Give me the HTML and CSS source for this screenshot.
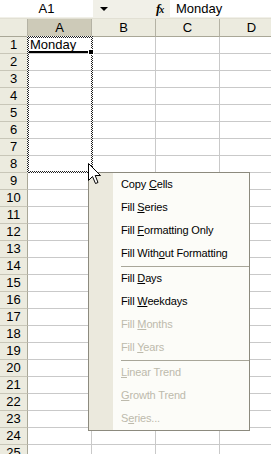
FILE: index.html
```html
<!DOCTYPE html>
<html>
<head>
<meta charset="utf-8">
<link rel="stylesheet" href="styles.css">
</head>
<body>
<div class="app">
  <div class="fbar">
    <div class="namebox">A1</div>
    <div class="drop"><span class="tri"></span></div>
    <div class="fx"><i>f</i><span class="x">x</span></div>
    <div class="formula">Monday</div>
  </div>
  <div class="sheet">
    <div class="hd corner"></div><div class="hd sel">A</div><div class="hd">B</div><div class="hd">C</div><div class="hd">D</div>
    <div class="rh">1</div><div class="c">Monday</div><div class="c"></div><div class="c"></div><div class="c"></div>
    <div class="rh">2</div><div class="c"></div><div class="c"></div><div class="c"></div><div class="c"></div>
    <div class="rh">3</div><div class="c"></div><div class="c"></div><div class="c"></div><div class="c"></div>
    <div class="rh">4</div><div class="c"></div><div class="c"></div><div class="c"></div><div class="c"></div>
    <div class="rh">5</div><div class="c"></div><div class="c"></div><div class="c"></div><div class="c"></div>
    <div class="rh">6</div><div class="c"></div><div class="c"></div><div class="c"></div><div class="c"></div>
    <div class="rh">7</div><div class="c"></div><div class="c"></div><div class="c"></div><div class="c"></div>
    <div class="rh">8</div><div class="c"></div><div class="c"></div><div class="c"></div><div class="c"></div>
    <div class="rh">9</div><div class="c"></div><div class="c"></div><div class="c"></div><div class="c"></div>
    <div class="rh">10</div><div class="c"></div><div class="c"></div><div class="c"></div><div class="c"></div>
    <div class="rh">11</div><div class="c"></div><div class="c"></div><div class="c"></div><div class="c"></div>
    <div class="rh">12</div><div class="c"></div><div class="c"></div><div class="c"></div><div class="c"></div>
    <div class="rh">13</div><div class="c"></div><div class="c"></div><div class="c"></div><div class="c"></div>
    <div class="rh">14</div><div class="c"></div><div class="c"></div><div class="c"></div><div class="c"></div>
    <div class="rh">15</div><div class="c"></div><div class="c"></div><div class="c"></div><div class="c"></div>
    <div class="rh">16</div><div class="c"></div><div class="c"></div><div class="c"></div><div class="c"></div>
    <div class="rh">17</div><div class="c"></div><div class="c"></div><div class="c"></div><div class="c"></div>
    <div class="rh">18</div><div class="c"></div><div class="c"></div><div class="c"></div><div class="c"></div>
    <div class="rh">19</div><div class="c"></div><div class="c"></div><div class="c"></div><div class="c"></div>
    <div class="rh">20</div><div class="c"></div><div class="c"></div><div class="c"></div><div class="c"></div>
    <div class="rh">21</div><div class="c"></div><div class="c"></div><div class="c"></div><div class="c"></div>
    <div class="rh">22</div><div class="c"></div><div class="c"></div><div class="c"></div><div class="c"></div>
    <div class="rh">23</div><div class="c"></div><div class="c"></div><div class="c"></div><div class="c"></div>
    <div class="rh">24</div><div class="c"></div><div class="c"></div><div class="c"></div><div class="c"></div>
    <div class="rh">25</div><div class="c"></div><div class="c"></div><div class="c"></div><div class="c"></div>
  </div>

  <div class="marquee">
    <span class="m-top"></span><span class="m-bottom"></span><span class="m-left"></span><span class="m-right"></span>
  </div>
  <div class="active-line"></div>
  <div class="handle"></div>

  <div class="menu">
    <div class="item">Copy <u>C</u>ells</div>
    <div class="item">Fill <u>S</u>eries</div>
    <div class="item">Fill <u>F</u>ormatting Only</div>
    <div class="item">Fill With<u>o</u>ut Formatting</div>
    <div class="sep"></div>
    <div class="item">Fill <u>D</u>ays</div>
    <div class="item">Fill <u>W</u>eekdays</div>
    <div class="item dis">Fill <u>M</u>onths</div>
    <div class="item dis">Fill <u>Y</u>ears</div>
    <div class="sep"></div>
    <div class="item dis"><u>L</u>inear Trend</div>
    <div class="item dis"><u>G</u>rowth Trend</div>
    <div class="item dis">S<u>e</u>ries...</div>
  </div>

  <svg class="cursor" width="14" height="22" viewBox="0 0 14 22">
    <path d="M0.5 0.5 L0.5 17.5 L4.5 13.5 L7.5 20.5 L10 19.5 L7.2 12.5 L12.5 12.5 Z" fill="#fff" stroke="#000" stroke-width="1" stroke-linejoin="miter"/>
  </svg>
</div>
</body>
</html>
```

FILE: styles.css
```css
html, body {
  margin: 0;
  padding: 0;
}
body {
  width: 271px;
  height: 454px;
  overflow: hidden;
  background: #fff;
  font-family: "Liberation Sans", Arial, sans-serif;
  font-size: 13px;
  color: #000;
}
.app {
  position: relative;
  width: 271px;
  height: 454px;
  overflow: hidden;
}
.fbar {
  display: flex;
  height: 19px;
  background: #f1f0e8;
  box-sizing: border-box;
  border-bottom: 1px solid #e2e0d4;
}
.namebox {
  width: 93px;
  height: 17px;
  background: #fff;
  text-align: center;
  line-height: 17px;
}
.drop {
  width: 62px;
  display: flex;
  align-items: center;
  padding-left: 7px;
  box-sizing: border-box;
  height: 17px;
}
.tri {
  width: 0;
  height: 0;
  border-left: 4px solid transparent;
  border-right: 4px solid transparent;
  border-top: 4px solid #000;
}
.fx {
  width: 15px;
  height: 17px;
  line-height: 17px;
  font-family: "Liberation Serif", "Times New Roman", serif;
  font-size: 13px;
  font-weight: bold;
  padding-left: 1px;
  box-sizing: border-box;
  letter-spacing: -1px;
}
.fx i { font-style: italic; }
.fx .x { font-size: 10px; font-style: italic; }
.formula {
  flex: 1;
  height: 17px;
  line-height: 17px;
  background: #fff;
  padding-left: 6px;
}
.sheet {
  display: grid;
  grid-template-columns: 28px 64px 64px 64px 64px;
  grid-template-rows: 18px;
  grid-auto-rows: 17px;
  width: 284px;
}
.sheet > div {
  box-sizing: border-box;
  border-right: 1px solid #c9c9c9;
  border-bottom: 1px solid #c9c9c9;
  line-height: 16px;
}
.hd {
  background: #ecebdf;
  text-align: center;
  line-height: 17px !important;
  border-right-color: #b4b2a4 !important;
  border-bottom-color: #a9a797 !important;
}
.hd.sel {
  background: #cdcab8;
}
.rh {
  background: #ecebdf;
  text-align: center;
  border-right-color: #a9a797 !important;
  border-bottom-color: #c8c6b8 !important;
}
.c {
  padding-left: 2px;
  white-space: nowrap;
}
.marquee {
  position: absolute;
  left: 27px;
  top: 36px;
  width: 66px;
  height: 137px;
}
.marquee span {
  position: absolute;
  background: repeating-conic-gradient(#222 0 25%, #fff 0 50%) 0 0 / 2px 2px;
}
.m-top { left: 0; top: 0; width: 100%; height: 2px; }
.m-bottom { left: 0; bottom: 0; width: 100%; height: 2px; }
.m-left { left: 0; top: 0; width: 2px; height: 100%; }
.m-right { right: 0; top: 0; width: 2px; height: 100%; }
.active-line {
  position: absolute;
  left: 29px;
  top: 51px;
  width: 60px;
  height: 2px;
  background: #000;
}
.handle {
  position: absolute;
  left: 88px;
  top: 49px;
  width: 4px;
  height: 4px;
  background: #000;
  border: 1px solid #fff;
}
.menu {
  position: absolute;
  left: 88px;
  top: 172px;
  width: 162px;
  height: 259px;
  box-sizing: border-box;
  border: 1px solid #8c8a7e;
  background: linear-gradient(to right, #ebe9dd 0 24px, #fcfcf8 24px);
  display: flex;
  flex-direction: column;
  font-size: 11px;
  letter-spacing: -0.15px;
}
.item {
  height: 23px;
  line-height: 23px;
  padding-left: 32px;
  white-space: nowrap;
}
.item.dis {
  color: #bdbaac;
}
.sep {
  height: 1px;
  margin: 1px 0 0 32px;
  background: #a8a699;
}
.cursor {
  position: absolute;
  left: 88px;
  top: 163px;
}
```
